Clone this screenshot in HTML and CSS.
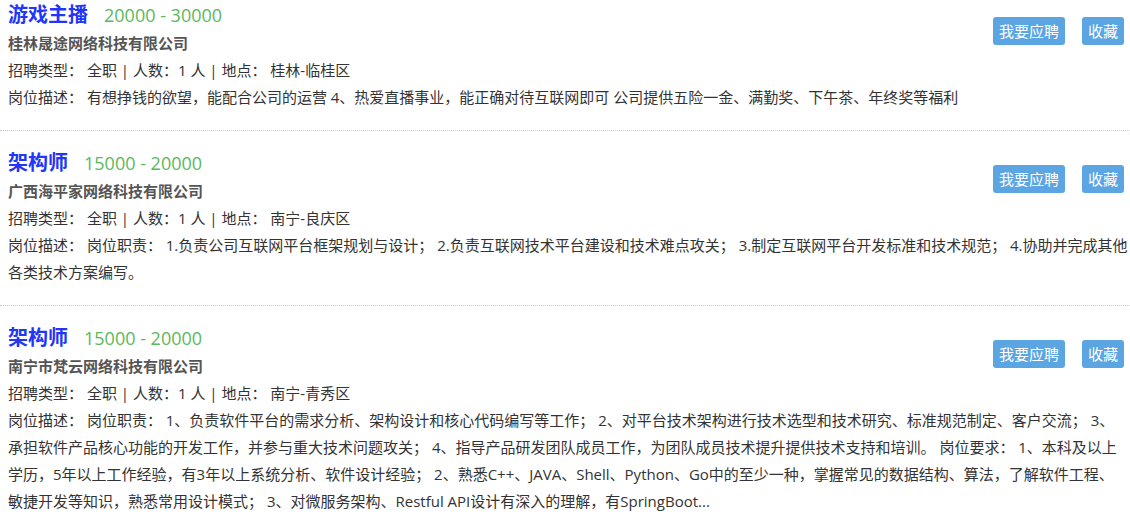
FILE: index.html
```html
<!DOCTYPE html>
<html lang="zh-CN">
<head>
<meta charset="utf-8">
<title>职位列表</title>
<link rel="stylesheet" href="styles.css">
</head>
<body>
<ul class="job-list">
  <li class="job">
    <div class="actions"><a class="btn">我要应聘</a><a class="btn">收藏</a></div>
    <div class="job-head"><span class="job-title">游戏主播</span><span class="salary">20000 - 30000</span></div>
    <div class="company">桂林晟途网络科技有限公司</div>
    <div class="meta">招聘类型： 全职 | 人数：1 人 | 地点： 桂林-临桂区</div>
    <p class="desc">岗位描述： 有想挣钱的欲望，能配合公司的运营 4、热爱直播事业，能正确对待互联网即可 公司提供五险一金、满勤奖、下午茶、年终奖等福利</p>
  </li>
  <li class="job">
    <div class="actions"><a class="btn">我要应聘</a><a class="btn">收藏</a></div>
    <div class="job-head"><span class="job-title">架构师</span><span class="salary">15000 - 20000</span></div>
    <div class="company">广西海平家网络科技有限公司</div>
    <div class="meta">招聘类型： 全职 | 人数：1 人 | 地点： 南宁-良庆区</div>
    <p class="desc">岗位描述： 岗位职责： 1.负责公司互联网平台框架规划与设计； 2.负责互联网技术平台建设和技术难点攻关； 3.制定互联网平台开发标准和技术规范； 4.协助并完成其他各类技术方案编写。</p>
  </li>
  <li class="job">
    <div class="actions"><a class="btn">我要应聘</a><a class="btn">收藏</a></div>
    <div class="job-head"><span class="job-title">架构师</span><span class="salary">15000 - 20000</span></div>
    <div class="company">南宁市梵云网络科技有限公司</div>
    <div class="meta">招聘类型： 全职 | 人数：1 人 | 地点： 南宁-青秀区</div>
    <p class="desc">岗位描述： 岗位职责： 1、负责软件平台的需求分析、架构设计和核心代码编写等工作； 2、对平台技术架构进行技术选型和技术研究、标准规范制定、客户交流； 3、承担软件产品核心功能的开发工作，并参与重大技术问题攻关； 4、指导产品研发团队成员工作，为团队成员技术提升提供技术支持和培训。 岗位要求： 1、本科及以上学历，5年以上工作经验，有3年以上系统分析、软件设计经验； 2、熟悉C++、JAVA、Shell、Python、Go中的至少一种，掌握常见的数据结构、算法，了解软件工程、敏捷开发等知识，熟悉常用设计模式； 3、对微服务架构、Restful API设计有深入的理解，有SpringBoot...</p>
  </li>
</ul>
</body>
</html>
```

FILE: styles.css
```css
html, body {
  margin: 0;
  padding: 0;
  background: #fff;
}

body {
  font-family: "Open Sans", "Noto Sans CJK SC", sans-serif;
  font-size: 15px;
  color: #333;
}

.job-list {
  list-style: none;
  margin: 0;
  padding: 0;
}

.job {
  padding: 17px 1.5px 19px 8px;
  border-bottom: 1px dotted #c8c8c8;
}

.job:first-child {
  padding-top: 0;
}

.actions {
  float: right;
  display: flex;
  gap: 17px;
  margin: 17px 4.5px 0 0;
}

.btn {
  display: block;
  height: 28px;
  line-height: 28px;
  padding: 0 6px;
  background: #5ba5e2;
  color: #fff;
  font-size: 15px;
  border-radius: 3px;
  cursor: pointer;
}

.job-head {
  height: 30px;
  line-height: 30px;
}

.job-title {
  font-size: 20px;
  font-weight: bold;
  color: #2236f8;
}

.salary {
  margin-left: 16px;
  font-size: 18px;
  color: #5cb85c;
}

.company {
  line-height: 27px;
  font-weight: bold;
  color: #555;
}

.meta {
  line-height: 27px;
}

.desc {
  margin: 0;
  line-height: 27px;
}
```
